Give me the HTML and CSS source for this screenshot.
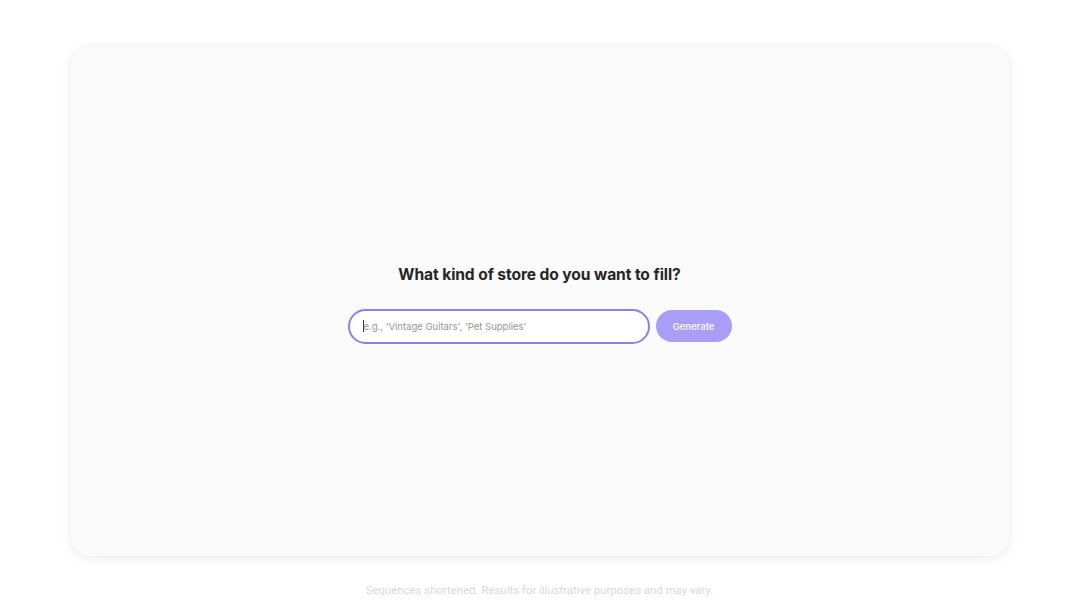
FILE: index.html
```html
<!DOCTYPE html>
<html>
<head>
<meta charset="utf-8">
<link rel="stylesheet" href="styles.css">
</head>
<body>
<div class="page">
  <main class="card">
    <h1 class="title">What kind of store do you want to fill?</h1>
    <form class="row">
      <div class="input"><span class="caret"></span><span class="ph">e.g., 'Vintage Guitars', 'Pet Supplies'</span></div>
      <button type="button" class="btn">Generate</button>
    </form>
  </main>
  <footer class="note">Sequences shortened. Results for illustrative purposes and may vary.</footer>
</div>
</body>
</html>
```
FILE: styles.css
```css
html, body { margin: 0; padding: 0; background: #ffffff; }
body { font-family: Inter, "Noto Sans", sans-serif; width: 1079px; height: 607px; overflow: hidden; }
.page { display: flex; flex-direction: column; align-items: center; padding-top: 46px; }
.card {
  width: 938px; height: 510px; box-sizing: border-box;
  background: #fafafa; border-radius: 18px;
  box-shadow: 0 2px 12px rgba(0,0,0,0.08), 0 0 2px rgba(0,0,0,0.04);
  display: flex; flex-direction: column; align-items: center; justify-content: center;
  padding-top: 6px;
}
.title { margin: 0 0 25px 0; font-size: 15.6px; font-weight: 700; color: #262626; letter-spacing: -0.1px; }
.row { display: flex; align-items: center; gap: 6px; margin: 0; }
.input {
  width: 302px; height: 35px; box-sizing: border-box;
  border: 2px solid #8e7fe8; border-radius: 18px; background: #fff;
  display: flex; align-items: center; padding-left: 13px;
  font-size: 9.6px; color: #959595;
}
.caret { width: 1px; height: 12px; background: #333; }
.ph { letter-spacing: -0.05px; }
.btn {
  width: 76px; height: 32px; border: 0; border-radius: 16px;
  background: #a99df6; color: #fff; font-family: Inter, sans-serif; font-size: 9.5px; font-weight: 500; padding: 0;
}
.note { margin-top: 27px; font-family: Roboto, "Open Sans", sans-serif; font-size: 11.4px; color: #d8d8d8; }
```
